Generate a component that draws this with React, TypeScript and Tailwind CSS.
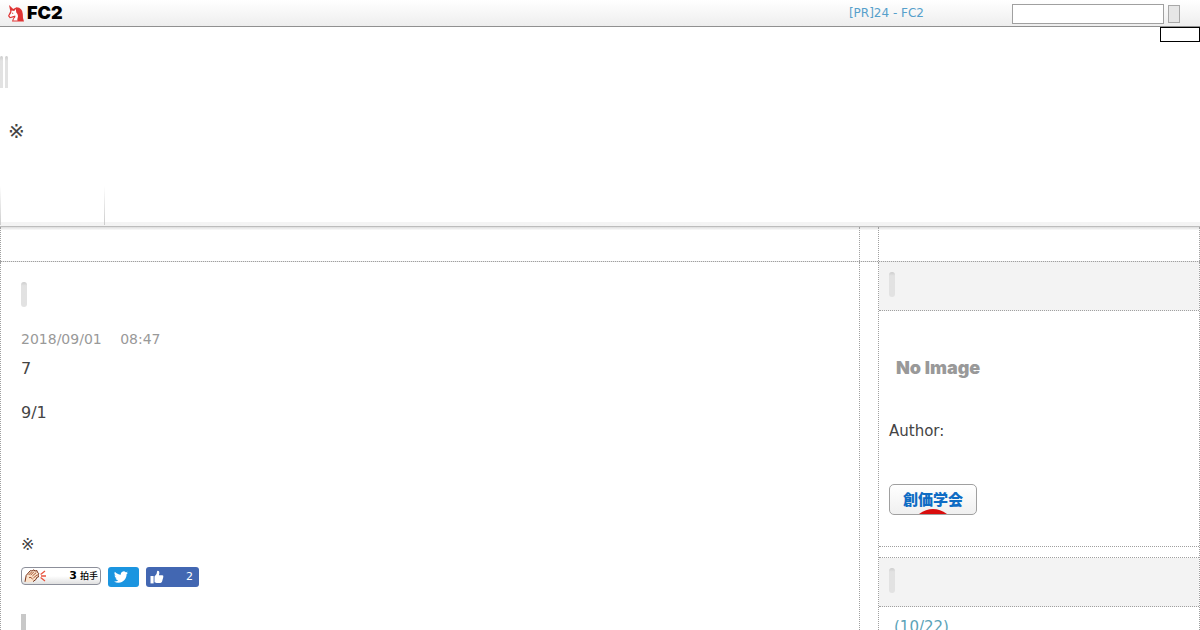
import React from "react";

function Pill({ className = "h-[25px] w-1.5 rounded-[3px]" }: { className?: string }) {
  return (
    <span
      className={`block bg-linear-to-b from-[#cccccc] to-[#e2e2e2] to-15% ${className}`}
    />
  );
}

function Unicorn() {
  return (
    <svg viewBox="0 0 16 17" className="h-[17px] w-4" aria-hidden="true">
      <path
        d="M1 0 L5.2 4 L8.5 2.2 Q14.5 2.6 14.8 9 Q14.6 12.5 16 16.6 L4 16.6 Q4.4 13.8 6 12.2 L1.8 13.2 L0 11 L2.3 6.2 Z"
        fill="#df3434"
      />
      <path
        d="M3.6 5.4 L6.2 6 L7.8 4 L8.3 7.4 Q10.8 10 9.6 13 Q9 14.8 9.6 15.6 L5.3 15.6 Q5.6 13.8 7.4 12 L7.2 10.6 L2.4 12 L1.3 10.8 L3.2 8 Z"
        fill="#fff"
      />
      <path d="M4 7.6 L5.6 8.2 L4.2 9 Z" fill="#df3434" />
    </svg>
  );
}

function ClapHand() {
  return (
    <svg viewBox="0 0 23 14" className="h-3.5 w-[23px]" aria-hidden="true">
      <path
        d="M1 12.8 L2.2 6.4 L6.4 1.6 L8 2 L10 .8 L11 2 L13 1.6 L13.4 3.4 L14.8 4.4 L14 6 L14.6 7.8 L12.8 8.4 L12 10.4 L9 12.6 L4 13.4 Z"
        fill="#fbe3cd"
      />
      <path
        d="M1 12.8 L2.2 6.4 L6.4 1.6 L8 2 L10 .8 L11 2 L13 1.6 L13.4 3.4 L14.8 4.4 L14 6 L14.6 7.8 L12.8 8.4 L12 10.4 L9 12.6"
        fill="none"
        stroke="#7a3419"
        strokeWidth="1"
      />
      <path
        d="M4.6 6 L7.6 3 M6.6 6.2 L10 2.6 M8.4 7 L12.2 3.6 M9.4 9 L13.2 5.8 M5 8.6 Q7.4 7.4 8.6 10.4"
        stroke="#a5552f"
        strokeWidth="1"
        fill="none"
      />
      <path
        d="M16.6 5.4 L21 2 M17 7 L22 7 M16.6 8.6 L21 12"
        stroke="#e8543f"
        strokeWidth="1.3"
      />
    </svg>
  );
}

function TwitterBird() {
  return (
    <svg viewBox="0 0 24 24" className="size-3.5" fill="#fff" aria-hidden="true">
      <path d="M23.95 4.57a10 10 0 0 1-2.82.78 4.96 4.96 0 0 0 2.16-2.73c-.95.56-2 .96-3.13 1.18a4.92 4.92 0 0 0-8.38 4.49C7.69 8.1 4.07 6.13 1.64 3.16a4.92 4.92 0 0 0 1.52 6.57 4.9 4.9 0 0 1-2.23-.61v.06a4.92 4.92 0 0 0 3.95 4.83 5 5 0 0 1-2.21.08 4.94 4.94 0 0 0 4.6 3.42A9.87 9.87 0 0 1 0 19.54a13.99 13.99 0 0 0 7.55 2.21c9.05 0 14-7.5 14-13.98 0-.21 0-.42-.02-.63a9.94 9.94 0 0 0 2.46-2.55z" />
    </svg>
  );
}

function ThumbUp() {
  return (
    <svg viewBox="0 0 14 14" className="size-3.5" fill="#fff" aria-hidden="true">
      <path d="M.5 6 H3.6 V13.4 H.5 Z" />
      <path d="M4.5 6.4 Q7.2 4.4 7.2 .9 Q9.4 .4 9.4 3 L8.9 5.2 H12.4 Q13.7 5.4 13.3 6.9 L12 11.8 Q11.6 12.9 10.4 12.9 H6.6 L4.5 12.2 Z" />
    </svg>
  );
}

function SideHeading({ label }: { label: string }) {
  return (
    <h2
      aria-label={label}
      className="h-[49px] border-b border-dotted border-[#a0a0a0] bg-[#f3f3f3] px-2.5 pt-2.5"
    >
      <Pill />
    </h2>
  );
}

export default function App() {
  return (
    <div className="flex min-h-screen flex-col bg-white font-['DejaVu_Sans','Noto_Sans_CJK_JP',sans-serif] text-[15px] leading-[22px] text-[#444444]">
      <header className="relative flex h-[27px] items-center border-b border-[#909090] bg-linear-to-b from-white to-[#eeeeee] pr-5 pl-2">
        <a href="#" className="flex items-center gap-[3px] font-['Inter',sans-serif] text-lg font-black text-black">
          <Unicorn />
          FC2
        </a>
        <a href="#" className="mr-[88px] ml-auto text-xs text-[#56a0cb]">
          [PR]24 - FC2
        </a>
        <form className="flex items-center gap-1 pt-px" onSubmit={(e) => e.preventDefault()}>
          <input
            type="text"
            aria-label="Search"
            className="h-5 w-[152px] border border-[#a0a0a0] bg-white px-1 text-xs outline-none"
          />
          <button
            type="submit"
            aria-label="Submit search"
            className="h-[18px] w-3 border border-[#a8a8a8] bg-[#e6e6e6]"
          />
        </form>
        <div className="absolute top-[27px] right-0 h-[15px] w-10 border border-black bg-white" />
      </header>

      <div className="pt-[29px]">
        <h1 className="flex gap-0.5" aria-label="Blog">
          <Pill className="h-8 w-[3px] rounded-t-xs" />
          <Pill className="h-8 w-[3px] rounded-t-xs" />
        </h1>
        <p className="mt-7 px-2 text-[20px] leading-[30px]">※</p>
      </div>

      <nav className="mt-10 border-b border-[#bdbdbd]">
        <div className="flex h-10 bg-linear-to-b from-transparent from-90% to-[#f4f4f4] to-90%">
          <div className="h-[39px] w-px bg-linear-to-b from-white to-[#cccccc]" />
          <a href="#" aria-label="Home" className="w-[103px]" />
          <div className="h-[39px] w-px bg-linear-to-b from-white to-[#cccccc]" />
        </div>
      </nav>

      <div className="flex flex-1 flex-col">
        <div className="flex h-[35px] gap-[18px] border-b border-dotted border-[#a0a0a0] bg-linear-to-b from-[#dddddd] to-white to-10%">
          <div className="flex-1 border-x border-dotted border-[#a0a0a0]" />
          <div className="w-[322px] border-x border-dotted border-[#a0a0a0]" />
        </div>
        <div className="flex flex-1 gap-[18px]">
          <main className="flex-1 border-x border-dotted border-[#a0a0a0] px-5 pt-5">
            <h2 aria-label="Entry">
              <Pill />
            </h2>
            <p className="mt-[21px] text-sm leading-[22px] text-[#999999]">
              2018/09/01{"\u3000 "}08:47
            </p>
            <div className="mt-2 text-base leading-[22px]">
              <p>7</p>
              <p className="mt-[22px]">9/1</p>
              <p className="mt-[110px]">※</p>
            </div>
            <div className="mt-[11px] flex gap-[7px]">
              <button
                type="button"
                className="flex h-[18px] w-20 items-center justify-between rounded-sm border border-[#8c8f9a] bg-linear-to-b from-white from-50% to-[#e0e0e0] px-0.5 text-black"
              >
                <ClapHand />
                <span className="flex items-center gap-[3px]">
                  <b className="text-[11px]">3</b>
                  <span className="font-['Noto_Sans_CJK_JP',sans-serif] text-[9px] font-medium">
                    拍手
                  </span>
                </span>
              </button>
              <button
                type="button"
                aria-label="Tweet"
                className="flex h-5 w-[31px] items-center rounded-[3px] bg-[#1b95e0] pl-1.5"
              >
                <TwitterBird />
              </button>
              <button
                type="button"
                aria-label="Like 2"
                className="flex h-5 w-[53px] items-center justify-between rounded-[3px] bg-[#4267b2] pr-1.5 pl-1 text-[11px] text-white"
              >
                <ThumbUp />2
              </button>
            </div>
            <div className="mt-[27px] h-4 w-[5px] bg-[#c8c8c8]" />
          </main>

          <aside className="w-[322px] border-x border-dotted border-[#a0a0a0]">
            <section className="border-b border-dotted border-[#a0a0a0]">
              <SideHeading label="Profile" />
              <div className="px-2.5 pt-[45px] pb-[31px]">
                <div className="px-[7px] font-['Inter',sans-serif] text-lg leading-6 font-black text-[#999999]">
                  No Image
                </div>
                <p className="mt-10">Author:</p>
                <a
                  href="#"
                  className="relative mt-[42px] flex h-[31px] w-[88px] justify-center overflow-hidden rounded-[5px] border border-[#a0a0a0] bg-linear-to-b from-white to-[#f0f0f0] pt-[3px] font-['Noto_Sans_CJK_JP',sans-serif] font-black text-[#0f6cc4]"
                >
                  創価学会
                  <svg
                    viewBox="0 0 28 5"
                    className="absolute bottom-0 h-[5px] w-7"
                    aria-hidden="true"
                  >
                    <path d="M0 5 Q14 -5 28 5 Z" fill="#d90d0d" />
                  </svg>
                </a>
              </div>
            </section>
            <section className="mt-2.5 border-t border-dotted border-[#a0a0a0]">
              <SideHeading label="Recent entries" />
              <a href="#" className="block px-[15px] pt-[9px] text-[#5ba3b8]">
                (10/22)
              </a>
            </section>
          </aside>
        </div>
      </div>
    </div>
  );
}
